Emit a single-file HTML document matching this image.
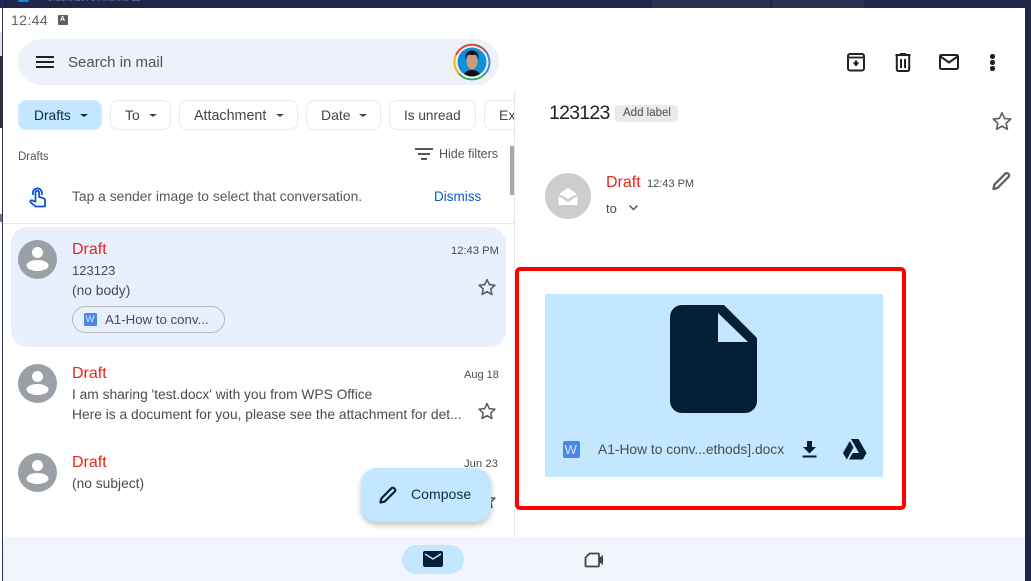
<!DOCTYPE html>
<html lang="en">
<head>
<meta charset="utf-8">
<title>Gmail</title>
<style>
html,body{margin:0;padding:0;width:1031px;height:581px;overflow:hidden;background:#fff}
body{position:relative;font-family:"Liberation Sans",sans-serif;color:#444746}
.a{position:absolute}
.t{position:absolute;white-space:nowrap;line-height:1}
.chip{position:absolute;top:100px;height:30px;box-sizing:border-box;border:1px solid #e6e8ea;border-radius:8px;background:#fff}
.av{position:absolute;left:18px;width:39px;height:39px}
.red{color:#e3281e;font-size:16px}
.gr{color:#4a4c4e}
svg{position:absolute;display:block}
</style>
</head>
<body>
<!-- frame -->
<div class="a" style="left:0;top:0;width:1031px;height:8px;background:#20264a"></div>
<div class="a" style="top:0;width:118px;height:8px;background:#2c3152;left:652px"></div>
<div class="a" style="left:772px;top:0;width:92px;height:8px;background:#2c3152"></div>
<div class="t" style="left:48px;top:-6px;font-size:9px;color:#6d7186">3.13.0.1076 Android 11</div>
<div class="a" style="left:18px;top:0;width:11px;height:2px;background:#1b87d6;border-radius:0 0 6px 6px"></div>
<div class="a" style="left:0;top:32px;width:2px;height:24px;background:#e0e0e0"></div>
<div class="a" style="left:0;top:56px;width:2px;height:72px;background:#333"></div>
<div class="a" style="left:0;top:214px;width:2px;height:8px;background:#777"></div>
<div class="a" style="left:2px;top:0;width:1px;height:581px;background:#2b3058"></div>
<div class="a" style="left:1025px;top:0;width:6px;height:581px;background:#20264a"></div>

<!-- status -->
<div class="t" style="left:11px;top:13px;font-size:14px;color:#5f6163;letter-spacing:.4px">12:44</div>
<div class="a" style="left:58px;top:15px;width:10px;height:10px;background:#5c5e60;border-radius:1px"></div>
<div class="t" style="left:60px;top:16px;font-size:7px;color:#fff;font-weight:bold">A</div>

<!-- search -->
<div class="a" style="left:18px;top:39px;width:481px;height:46px;border-radius:23px;background:#edf2fa"></div>
<div class="a" style="left:36px;top:56px;width:18px;height:2px;background:#202124"></div>
<div class="a" style="left:36px;top:61px;width:18px;height:2px;background:#202124"></div>
<div class="a" style="left:36px;top:66px;width:18px;height:2px;background:#202124"></div>
<div class="t" style="left:68px;top:55px;font-size:15px;color:#505356">Search in mail</div>
<svg style="left:453px;top:43px" width="38" height="38" viewBox="0 0 38 38">
<circle cx="19" cy="19" r="17.5" fill="none" stroke="#34a853" stroke-width="1.8"/>
<path d="M3 12A17.5 17.5 0 0 1 33 9" fill="none" stroke="#ea4335" stroke-width="1.8"/>
<path d="M33 9A17.5 17.5 0 0 1 32 31" fill="none" stroke="#4285f4" stroke-width="1.8"/>
<path d="M1.500 19A17.500 17.500 0 0 1 3 12" fill="none" stroke="#fbbc04" stroke-width="1.8"/>
<path d="M1.500 19A17.500 17.500 0 0 0 6 31" fill="none" stroke="#fbbc04" stroke-width="1.8"/>
<circle cx="19" cy="19" r="14.500" fill="#0f8fd8"/>
<path d="M11 31c2-3 5-4 8-4s6 1 8 4a14.500 14.500 0 0 1-16 0z" fill="#111"/>
<ellipse cx="19" cy="18.500" rx="5.500" ry="8" fill="#c99a80"/>
<path d="M12.500 17c-1-7 3-9.500 6.500-9.500s7.500 2.500 6.500 9.500c-.5-3-1.500-5-3-5.500-2 .8-5 .8-7 0-1.500.5-2.500 2.500-3 5.500z" fill="#15110f"/>
</svg>

<!-- chips -->
<div class="chip" style="left:18px;width:84px;background:#c2e7ff;border-color:#d3ecfd"></div>
<div class="t" style="left:34px;top:109px;font-size:13.800px;color:#0f2a45">Drafts</div>
<div class="a" style="left:80px;top:114px;border:4px solid transparent;border-top:3.500px solid #0f2a45;border-bottom:0"></div>
<div class="chip" style="left:110px;width:61px"></div>
<div class="t" style="left:125px;top:108px;font-size:14px">To</div>
<div class="a" style="left:149px;top:114px;border:4px solid transparent;border-top:3.500px solid #444;border-bottom:0"></div>
<div class="chip" style="left:179px;width:119px"></div>
<div class="t" style="left:194px;top:109px;font-size:14.300px">Attachment</div>
<div class="a" style="left:276px;top:114px;border:4px solid transparent;border-top:3.500px solid #444;border-bottom:0"></div>
<div class="chip" style="left:306px;width:75px"></div>
<div class="t" style="left:321px;top:108px;font-size:14px">Date</div>
<div class="a" style="left:359px;top:114px;border:4px solid transparent;border-top:3.500px solid #444;border-bottom:0"></div>
<div class="chip" style="left:389px;width:87px"></div>
<div class="t" style="left:404px;top:109px;font-size:13.600px">Is unread</div>
<div class="a" style="left:484px;top:100px;width:31px;height:30px;overflow:hidden">
<div class="chip" style="left:0;top:0;width:60px"></div>
<div class="t" style="left:15px;top:8px;font-size:14px">Ex</div>
</div>

<div class="t" style="left:18px;top:152px;font-size:11.500px;color:#55585a">Drafts</div>
<div class="a" style="left:415px;top:148px;width:18px;height:2px;background:#555"></div>
<div class="a" style="left:418px;top:153px;width:12px;height:2px;background:#555"></div>
<div class="a" style="left:421px;top:158px;width:6px;height:2px;background:#555"></div>
<div class="t" style="left:439px;top:148px;font-size:12.500px;color:#555">Hide filters</div>
<div class="a" style="left:510px;top:146px;width:4px;height:49px;background:#a7a9ab"></div>

<!-- tip -->
<svg style="left:29px;top:186px" width="18" height="22" viewBox="0 0 18 22">
<path d="M6.500 9.500V6.500a1.800 1.800 0 0 1 3.600 0v4.500l4.300 1.200c1 .3 1.600 1 1.600 2v6.300H6.500L1.500 16.200c-.6-1 .2-2.200 1.400-1.800l3.600 1.300z" fill="none" stroke="#0b57d0" stroke-width="1.800" stroke-linejoin="round"/>
<path d="M4.400 9a4.500 4.500 0 1 1 8 0" fill="none" stroke="#0b57d0" stroke-width="1.800"/>
</svg>
<div class="t" style="left:72px;top:190px;font-size:13.850px;color:#55585a">Tap a sender image to select that conversation.</div>
<div class="t" style="left:434px;top:190px;font-size:13.500px;color:#0b57d0">Dismiss</div>
<div class="a" style="left:3px;top:223px;width:512px;height:1px;background:#e8e9ea"></div>

<!-- divider -->
<div class="a" style="left:514px;top:92px;width:1px;height:445px;background:#e6e6e6"></div>

<!-- row 1 -->
<div class="a" style="left:11px;top:227px;width:495px;height:120px;border-radius:16px;background:#e9f0fd"></div>
<svg class="av" style="top:240px" viewBox="0 0 39 39"><circle cx="19.500" cy="19.500" r="19.500" fill="#9aa0a6"/><circle cx="19.500" cy="12.500" r="5.500" fill="#fff"/><ellipse cx="19.500" cy="25.500" rx="11" ry="5.500" fill="#fff"/></svg>
<div class="t red" style="left:72px;top:242px">Draft</div>
<div class="t gr" style="left:451px;top:246px;font-size:11.200px">12:43 PM</div>
<div class="t gr" style="left:72px;top:264px;font-size:13px">123123</div>
<div class="t gr" style="left:72px;top:284px;font-size:13.800px">(no body)</div>
<svg style="left:477px;top:277px" width="20" height="20" viewBox="0 0 24 24"><path d="M12 3l2.800 6.200 6.700.7-5 4.500 1.400 6.600L12 17.600 6.100 21l1.400-6.600-5-4.500 6.700-.7z" fill="none" stroke="#555" stroke-width="1.800" stroke-linejoin="round"/></svg>
<div class="a" style="left:72px;top:306px;width:153px;height:27px;box-sizing:border-box;border:1px solid #b6b9bc;border-radius:14px"></div>
<div class="a" style="left:84px;top:313px;width:13px;height:13px;background:#4c86e8;border-radius:1px"></div>
<div class="t" style="left:85.500px;top:315px;font-size:9.500px;color:#dce8fc">W</div>
<div class="t gr" style="left:105px;top:313px;font-size:13.250px">A1-How to conv...</div>

<!-- row 2 -->
<svg class="av" style="top:364px" viewBox="0 0 39 39"><circle cx="19.500" cy="19.500" r="19.500" fill="#9aa0a6"/><circle cx="19.500" cy="12.500" r="5.500" fill="#fff"/><ellipse cx="19.500" cy="25.500" rx="11" ry="5.500" fill="#fff"/></svg>
<div class="t red" style="left:72px;top:366px">Draft</div>
<div class="t gr" style="left:464px;top:370px;font-size:11px">Aug 18</div>
<div class="t gr" style="left:72px;top:388px;font-size:13.780px">I am sharing 'test.docx' with you from WPS Office</div>
<div class="t gr" style="left:72px;top:408px;font-size:13.800px">Here is a document for you, please see the attachment for det...</div>
<svg style="left:477px;top:401px" width="20" height="20" viewBox="0 0 24 24"><path d="M12 3l2.800 6.200 6.700.7-5 4.500 1.400 6.600L12 17.600 6.100 21l1.400-6.600-5-4.500 6.700-.7z" fill="none" stroke="#555" stroke-width="1.800" stroke-linejoin="round"/></svg>

<!-- row 3 -->
<svg class="av" style="top:453px" viewBox="0 0 39 39"><circle cx="19.500" cy="19.500" r="19.500" fill="#9aa0a6"/><circle cx="19.500" cy="12.500" r="5.500" fill="#fff"/><ellipse cx="19.500" cy="25.500" rx="11" ry="5.500" fill="#fff"/></svg>
<div class="t red" style="left:72px;top:455px">Draft</div>
<div class="t gr" style="left:464px;top:459px;font-size:11.300px">Jun 23</div>
<div class="t gr" style="left:72px;top:477px;font-size:13.800px">(no subject)</div>
<svg style="left:477px;top:490px" width="20" height="20" viewBox="0 0 24 24"><path d="M12 3l2.800 6.200 6.700.7-5 4.500 1.400 6.600L12 17.600 6.100 21l1.400-6.600-5-4.500 6.700-.7z" fill="none" stroke="#555" stroke-width="1.800" stroke-linejoin="round"/></svg>

<!-- compose -->
<div class="a" style="left:361px;top:468px;width:130px;height:54px;border-radius:16px;background:#c2e7ff;box-shadow:0 3px 6px rgba(0,0,0,.25)"></div>
<svg style="left:378px;top:485px" width="20" height="20" viewBox="0 0 20 20"><path d="M2.500 17.500l.8-4L13.500 3.200a1.800 1.800 0 0 1 2.500 0l.8.8a1.800 1.800 0 0 1 0 2.500L6.500 16.700z" fill="none" stroke="#0b2138" stroke-width="2.200" stroke-linejoin="round"/></svg>
<div class="t" style="left:411px;top:487px;font-size:14px;color:#0e2a47;letter-spacing:.05px">Compose</div>

<!-- bottom nav -->
<div class="a" style="left:3px;top:537px;width:1022px;height:44px;background:#f1f5fc"></div>
<div class="a" style="left:402px;top:545px;width:62px;height:29px;border-radius:15px;background:#c2e7ff"></div>
<svg style="left:423px;top:551px" width="20" height="16" viewBox="0 0 20 16"><rect width="20" height="16" rx="2" fill="#041e36"/><path d="M2 3l8 5 8-5" fill="none" stroke="#c2e7ff" stroke-width="1.500"/></svg>
<svg style="left:584px;top:551px" width="22" height="18" viewBox="0 0 22 18"><path d="M5.500 2.500h8.500a1 1 0 0 1 1 1v11a1 1 0 0 1-1 1H2.500a1 1 0 0 1-1-1V6.500z" fill="none" stroke="#444" stroke-width="1.800" stroke-linejoin="round"/><path d="M15 7l4-3v10l-4-3z" fill="#444"/></svg>

<!-- top actions -->
<svg style="left:844px;top:50px" width="24" height="24" viewBox="0 0 24 24">
<rect x="4" y="4" width="16" height="16.500" rx="2" fill="none" stroke="#202124" stroke-width="2"/>
<path d="M4.500 7.500h15" fill="none" stroke="#202124" stroke-width="1.800"/>
<path d="M8.500 12.500h2.300V10.500h2.400v2h2.300L12 16.500z" fill="#202124"/></svg>
<svg style="left:891px;top:50px" width="24" height="24" viewBox="0 0 24 24">
<path d="M4.500 5h15M9 4h6" stroke="#202124" stroke-width="2" fill="none"/>
<path d="M5.800 6v13.500a1.500 1.500 0 0 0 1.500 1.500h9.400a1.500 1.500 0 0 0 1.500-1.500V6" fill="none" stroke="#202124" stroke-width="2"/>
<path d="M10 9v9M14 9v9" stroke="#202124" stroke-width="2"/></svg>
<svg style="left:937px;top:50px" width="24" height="24" viewBox="0 0 24 24">
<rect x="3" y="5" width="18" height="14" rx="1.500" fill="none" stroke="#202124" stroke-width="2"/>
<path d="M3.500 6.500l8.500 6 8.500-6" fill="none" stroke="#202124" stroke-width="2"/></svg>
<div class="a" style="left:990px;top:54px;width:4.500px;height:4.500px;border-radius:50%;background:#202124"></div>
<div class="a" style="left:990px;top:60px;width:4.500px;height:4.500px;border-radius:50%;background:#202124"></div>
<div class="a" style="left:990px;top:66px;width:4.500px;height:4.500px;border-radius:50%;background:#202124"></div>

<!-- message header -->
<div class="t" style="left:549px;top:104px;font-size:19.500px;color:#202124;letter-spacing:-.75px">123123</div>
<div class="a" style="left:615px;top:105px;width:63px;height:17px;background:#e8eaed;border-radius:3px"></div>
<div class="t" style="left:623px;top:108px;font-size:11.500px;color:#4a4c4e">Add label</div>
<svg style="left:991px;top:110px" width="22" height="22" viewBox="0 0 24 24"><path d="M12 3l2.800 6.200 6.700.7-5 4.500 1.400 6.600L12 17.600 6.100 21l1.400-6.600-5-4.500 6.700-.7z" fill="none" stroke="#5f6368" stroke-width="1.800" stroke-linejoin="round"/></svg>
<svg style="left:545px;top:173px" width="46" height="46" viewBox="0 0 46 46"><circle cx="23" cy="23" r="23" fill="#cdcdcd"/><path d="M14 21l9-6 9 6-9 5z" fill="#fff"/><path d="M13.500 23l9.500 6 9.500-6v8a1 1 0 0 1-1 1H14.500a1 1 0 0 1-1-1z" fill="#fff"/></svg>
<div class="t" style="left:606px;top:175px;font-size:16px;color:#e3281e">Draft</div>
<div class="t gr" style="left:647px;top:179px;font-size:11px">12:43 PM</div>
<div class="t gr" style="left:606px;top:202px;font-size:13px">to</div>
<svg style="left:628px;top:204px" width="11" height="8" viewBox="0 0 11 8"><path d="M1.500 1.500l4 4 4-4" fill="none" stroke="#555" stroke-width="1.500"/></svg>
<svg style="left:991px;top:171px" width="21" height="20" viewBox="0 0 21 20"><path d="M2.500 18l.8-4.300L14.500 2.500a1.700 1.700 0 0 1 2.400 0l.8.800a1.700 1.700 0 0 1 0 2.400L6.500 17z" fill="none" stroke="#5f6368" stroke-width="2.300" stroke-linejoin="round"/></svg>

<!-- attachment -->
<div class="a" style="left:545px;top:294px;width:338px;height:183px;background:#c2e7ff;border-radius:1px"></div>
<svg style="left:670px;top:305px" width="87" height="108" viewBox="0 0 87 108">
<path d="M12 0H54L87 33V96a12 12 0 0 1-12 12H12A12 12 0 0 1 0 96V12A12 12 0 0 1 12 0z" fill="#041e36"/>
<path d="M48 8V37H78z" fill="#c2e7ff"/></svg>
<div class="a" style="left:563px;top:441px;width:17px;height:17px;background:#4c86e8;border-radius:2px"></div>
<div class="t" style="left:564.500px;top:443px;font-size:13px;color:#dbe8fc">W</div>
<div class="t gr" style="left:598px;top:443px;font-size:13.800px">A1-How to conv...ethods].docx</div>
<svg style="left:801px;top:440px" width="17" height="18" viewBox="0 0 17 18"><path d="M6 1h5v6h4l-6.500 6.500L2 7h4z" fill="#041e36"/><rect x="1.500" y="15.500" width="14" height="2" fill="#041e36"/></svg>
<svg style="left:843px;top:438px" width="24" height="22" viewBox="0 0 24 22">
<path d="M8 1h7.500l8 14h-7.500z" fill="#041e36"/><path d="M6.800 3L0 15l3.800 6.500L10.500 9.500z" fill="#041e36"/><path d="M6 21.500l3.700-6.500H23.500l-3.700 6.500z" fill="#041e36"/></svg>

<!-- red highlight -->
<div class="a" style="left:515px;top:267px;width:391px;height:243px;box-sizing:border-box;border:4px solid #fe0000;border-radius:5px"></div>
</body>
</html>
